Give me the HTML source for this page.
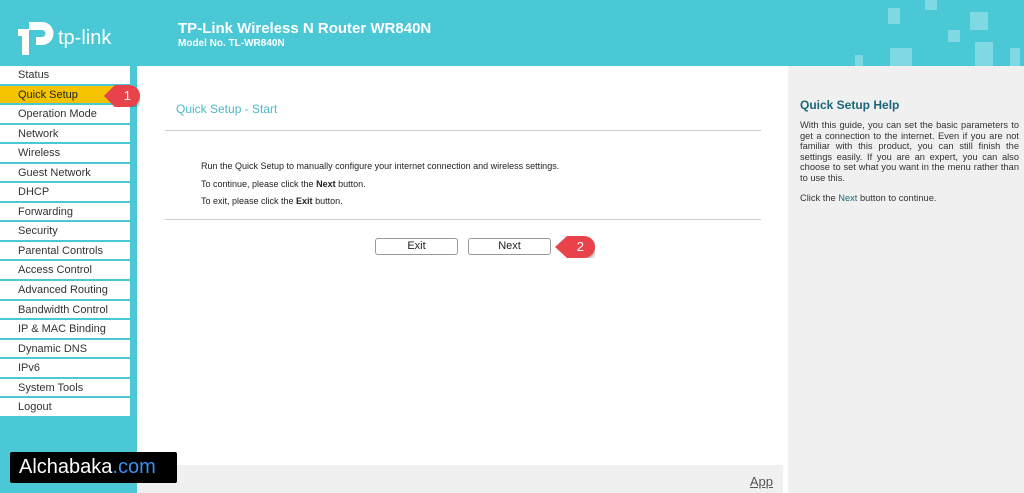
<!DOCTYPE html>
<html><head><style>
*{margin:0;padding:0;box-sizing:border-box}
body{width:1024px;height:493px;overflow:hidden;background:#4bc8d6;font-family:"Liberation Sans",Arial,sans-serif;position:relative}
.hdr{position:absolute;left:0;top:0;width:1024px;height:66px;background:#4bc8d6}
.t1{position:absolute;left:178px;top:20px;color:#fff;font-weight:bold;font-size:15px}
.t2{position:absolute;left:178px;top:38px;color:#fff;font-weight:bold;font-size:10px}
.menu{position:absolute;left:0;top:66px;width:130px}
.menu div{height:19.55px;background:#fff;border-bottom:2px solid #4bc8d6;font-size:11px;color:#333;padding-left:18px;line-height:19px}
.menu div.sel{background:#f5c400;color:#222}
.main{position:absolute;left:137px;top:66px;width:651px;height:427px;background:#fff}
.right{position:absolute;left:788px;top:66px;width:236px;height:427px;background:#f0f0f0}
.bot{position:absolute;left:137px;top:465px;width:646px;height:28px;background:#f0f0f0}
.sq{position:absolute;background:#7fd9e2}
.btn{position:absolute;top:238px;height:17px;border:1px solid #999;border-radius:3px;background:#fff;font-size:11px;text-align:center;line-height:15px;color:#222}
.mk{position:absolute;height:22px;background:#e8424a;color:#fff;font-size:13px;line-height:22px;border-radius:11px;text-align:center;box-shadow:1px 2px 3px rgba(0,0,0,.3)}
</style></head><body>
<div class="hdr">
<svg style="position:absolute;left:18px;top:19px" width="38" height="36" viewBox="0 0 38 36"><path d="M0 10h11v26h-7V17H0z M11 3h13a11.5 11.5 0 0 1 0 23h-6v-8h6a3.5 3.5 0 0 0 0-7H11z" fill="#fff"/></svg>
<div style="position:absolute;left:58px;top:27px;color:#fff;font-size:20px">tp-link</div>
<div class="t1">TP-Link Wireless N Router WR840N</div>
<div class="t2">Model No. TL-WR840N</div>
<div class="sq" style="left:888px;top:8px;width:12px;height:16px"></div>
<div class="sq" style="left:925px;top:0;width:12px;height:10px"></div>
<div class="sq" style="left:970px;top:12px;width:18px;height:18px"></div>
<div class="sq" style="left:948px;top:30px;width:12px;height:12px"></div>
<div class="sq" style="left:890px;top:48px;width:22px;height:18px"></div>
<div class="sq" style="left:975px;top:42px;width:18px;height:24px"></div>
<div class="sq" style="left:855px;top:55px;width:8px;height:11px"></div>
<div class="sq" style="left:1010px;top:48px;width:10px;height:18px"></div>
</div>
<div class="menu">
<div>Status</div><div class="sel">Quick Setup</div><div>Operation Mode</div><div>Network</div><div>Wireless</div><div>Guest Network</div><div>DHCP</div><div>Forwarding</div><div>Security</div><div>Parental Controls</div><div>Access Control</div><div>Advanced Routing</div><div>Bandwidth Control</div><div>IP &amp; MAC Binding</div><div>Dynamic DNS</div><div>IPv6</div><div>System Tools</div><div>Logout</div>
</div>
<div class="main">
<div style="position:absolute;left:39px;top:36px;color:#4bb8c8;font-size:12px">Quick Setup - Start</div>
<div style="position:absolute;left:28px;top:64px;width:596px;border-top:1px solid #ccc"></div>
<div style="position:absolute;left:64px;top:92px;font-size:9px;color:#222;line-height:17.5px">Run the Quick Setup to manually configure your internet connection and wireless settings.<br>To continue, please click the <b>Next</b> button.<br>To exit, please click the <b>Exit</b> button.</div>
<div style="position:absolute;left:28px;top:153px;width:596px;border-top:1px solid #ccc"></div>
</div>
<div class="mk" style="left:104px;top:85px;width:36px;clip-path:polygon(0 50%,30% 0,100% 0,100% 100%,30% 100%)">&nbsp;&nbsp;&nbsp;1</div>
<div class="btn" style="left:375px;width:83px">Exit</div>
<div class="btn" style="left:468px;width:83px">Next</div>
<div class="mk" style="left:555px;top:236px;width:40px;clip-path:polygon(0 50%,30% 0,100% 0,100% 100%,30% 100%)">&nbsp;&nbsp;&nbsp;2</div>
<div class="right">
<div style="position:absolute;left:12px;top:32px;color:#1a6678;font-weight:bold;font-size:12px">Quick Setup Help</div>
<div style="position:absolute;left:12px;top:54px;width:219px;font-size:9.3px;color:#333;line-height:10.6px;text-align:justify">With this guide, you can set the basic parameters to get a connection to the internet. Even if you are not familiar with this product, you can still finish the settings easily. If you are an expert, you can also choose to set what you want in the menu rather than to use this.</div>
<div style="position:absolute;left:12px;top:127px;font-size:9.3px;color:#333">Click the <span style="color:#1a6678">Next</span> button to continue.</div>
</div>
<div class="bot"><div style="position:absolute;right:10px;top:9px;font-size:13px;color:#555;text-decoration:underline">App</div></div>
<div style="position:absolute;left:10px;top:452px;width:167px;height:31px;background:#000;border-radius:2px;color:#fff;font-size:20px;line-height:31px;padding-left:9px;font-weight:500">Alchabaka<span style="color:#3b8ff0">.com</span></div>
</body></html>
